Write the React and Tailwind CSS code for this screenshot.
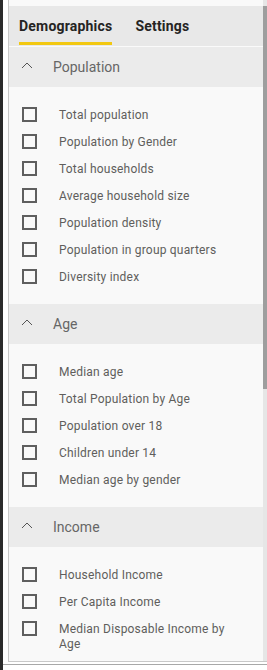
import React from 'react';

const sections = [
  {
    title: 'Population',
    items: [
      'Total population',
      'Population by Gender',
      'Total households',
      'Average household size',
      'Population density',
      'Population in group quarters',
      'Diversity index',
    ],
  },
  {
    title: 'Age',
    items: [
      'Median age',
      'Total Population by Age',
      'Population over 18',
      'Children under 14',
      'Median age by gender',
    ],
  },
  {
    title: 'Income',
    items: ['Household Income', 'Per Capita Income', 'Median Disposable Income by Age'],
  },
];

// Collapsible section header with chevron
function SectionHeader({ title }) {
  return (
    <div className="h-[40px] shrink-0 bg-[#ebebeb] flex items-center pl-[12px]">
      <svg width="12" height="7" viewBox="0 0 12 7" className="mb-[3px]">
        <polyline points="1,6 6,1 11,6" fill="none" stroke="#555" strokeWidth="1" />
      </svg>
      <span className="ml-[20px] text-[14px] text-[#666] leading-none">{title}</span>
    </div>
  );
}

function Row({ label }) {
  return (
    <div className="flex items-start pt-[6px] pb-[5px] pl-[13px] pr-[24px]">
      <div className="w-[15px] h-[15px] shrink-0 border-2 border-[#5f5f5f]" />
      <span className="ml-[22px] mt-[1px] flex-1 text-[12px] leading-[15px] tracking-[0.2px] text-[#605e5c]">
        {label}
      </span>
    </div>
  );
}

export default function App() {
  return (
    <div
      className="w-[267px] h-[670px] bg-white flex overflow-hidden"
      style={{ fontFamily: 'Roboto, "Liberation Sans", sans-serif' }}
    >
      {/* dark edge of the host window */}
      <div className="w-[3px] h-full shrink-0 bg-[#2b2b2b]" />

      <div className="flex-1 flex flex-col">
        <div className="h-[662px] pl-[5px] flex">
          <div className="flex-1 flex border-l border-b border-[#c8c8c8] bg-[#f9f9f9] overflow-hidden">
            <div className="flex-1 flex flex-col pt-[6px] overflow-hidden">
              {/* Tabs */}
              <div className="h-[40px] shrink-0 bg-[#e8e8e8] flex pl-[10px] gap-[23px]">
                <div className="flex flex-col">
                  <span className="pt-[10px] leading-[20px] text-[14px] font-bold tracking-[0.2px] text-[#252423]">
                    Demographics
                  </span>
                  <div className="mt-[6px] h-[3px] bg-[#f2c811]" />
                </div>
                <div className="flex flex-col">
                  <span className="pt-[10px] leading-[20px] text-[14px] font-bold tracking-[0.2px] text-[#252423]">
                    Settings
                  </span>
                </div>
              </div>
              <div className="h-px shrink-0 bg-[#fafafa]" />

              {sections.map((section) => (
                <div key={section.title} className="flex flex-col shrink-0">
                  <SectionHeader title={section.title} />
                  <div className="pt-[14px] pb-[14px]">
                    {section.items.map((item) => (
                      <Row key={item} label={item} />
                    ))}
                  </div>
                </div>
              ))}
            </div>

            {/* scrollbar */}
            <div className="w-[4px] shrink-0 bg-[#e6e6e6] flex flex-col">
              <div className="mt-[6px] h-[383px] bg-[#9e9e9e]" />
            </div>
          </div>
        </div>
        <div className="h-[2px]" />
        <div className="h-px bg-[#a8a8a8]" />
      </div>
    </div>
  );
}
